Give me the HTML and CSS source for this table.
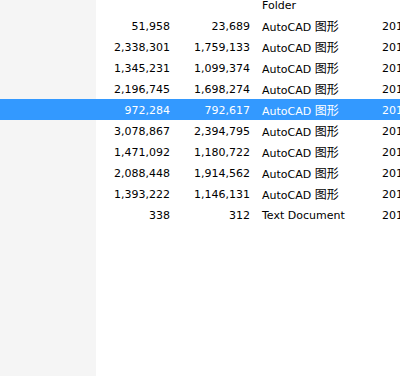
FILE: index.html
```html
<!doctype html>
<html lang="zh-CN">
  <head>
    <meta charset="UTF-8" />
    <title>Files</title>
    <link rel="stylesheet" href="styles.css">
  </head>
  <body>
    <div class="view">
      <div class="list">
        <div class="row">
          <span class="side"></span><span class="num"></span><span class="num"></span><span class="type">Folder</span><span class="date"></span>
        </div>
        <div class="row">
          <span class="side"></span><span class="num">51,958</span><span class="num">23,689</span><span class="type">AutoCAD <span class="cjk">图形</span></span><span class="date">2017</span>
        </div>
        <div class="row">
          <span class="side"></span><span class="num">2,338,301</span><span class="num">1,759,133</span><span class="type">AutoCAD <span class="cjk">图形</span></span><span class="date">2017</span>
        </div>
        <div class="row">
          <span class="side"></span><span class="num">1,345,231</span><span class="num">1,099,374</span><span class="type">AutoCAD <span class="cjk">图形</span></span><span class="date">2017</span>
        </div>
        <div class="row">
          <span class="side"></span><span class="num">2,196,745</span><span class="num">1,698,274</span><span class="type">AutoCAD <span class="cjk">图形</span></span><span class="date">2017</span>
        </div>
        <div class="row selected">
          <span class="side"></span><span class="num">972,284</span><span class="num">792,617</span><span class="type">AutoCAD <span class="cjk">图形</span></span><span class="date">2017</span>
        </div>
        <div class="row">
          <span class="side"></span><span class="num">3,078,867</span><span class="num">2,394,795</span><span class="type">AutoCAD <span class="cjk">图形</span></span><span class="date">2017</span>
        </div>
        <div class="row">
          <span class="side"></span><span class="num">1,471,092</span><span class="num">1,180,722</span><span class="type">AutoCAD <span class="cjk">图形</span></span><span class="date">2017</span>
        </div>
        <div class="row">
          <span class="side"></span><span class="num">2,088,448</span><span class="num">1,914,562</span><span class="type">AutoCAD <span class="cjk">图形</span></span><span class="date">2017</span>
        </div>
        <div class="row">
          <span class="side"></span><span class="num">1,393,222</span><span class="num">1,146,131</span><span class="type">AutoCAD <span class="cjk">图形</span></span><span class="date">2017</span>
        </div>
        <div class="row">
          <span class="side"></span><span class="num">338</span><span class="num">312</span><span class="type">Text Document</span><span class="date">2017</span>
        </div>
      </div>
    </div>
  </body>
</html>
```

FILE: styles.css
```css
html,
body {
  margin: 0;
  height: 100%;
  overflow: hidden;
}

body {
  font-family: "DejaVu Sans", "Noto Sans CJK SC", sans-serif;
  font-size: 11px;
  color: #000;
  background-color: #fff;
}

.view {
  height: 100%;
  background: linear-gradient(to right, #f5f5f5 96px, #fff 96px);
}

/* list is scrolled a few pixels down */
.list {
  margin-top: -6px;
}

.row {
  display: grid;
  grid-template-columns: 96px 80px 80px 120px 1fr;
  box-sizing: border-box;
  height: 21px;
  padding-top: 2px;
  align-items: center;
  line-height: 16px;
  white-space: nowrap;
  overflow: hidden;
}

.row.selected {
  background-color: #3399ff;
  color: #fff;
}

.num {
  text-align: right;
  padding-right: 6px;
}

.type,
.date {
  padding-left: 6px;
}

.cjk {
  font-family: "Noto Sans CJK SC", sans-serif;
  font-size: 12px;
}
```
